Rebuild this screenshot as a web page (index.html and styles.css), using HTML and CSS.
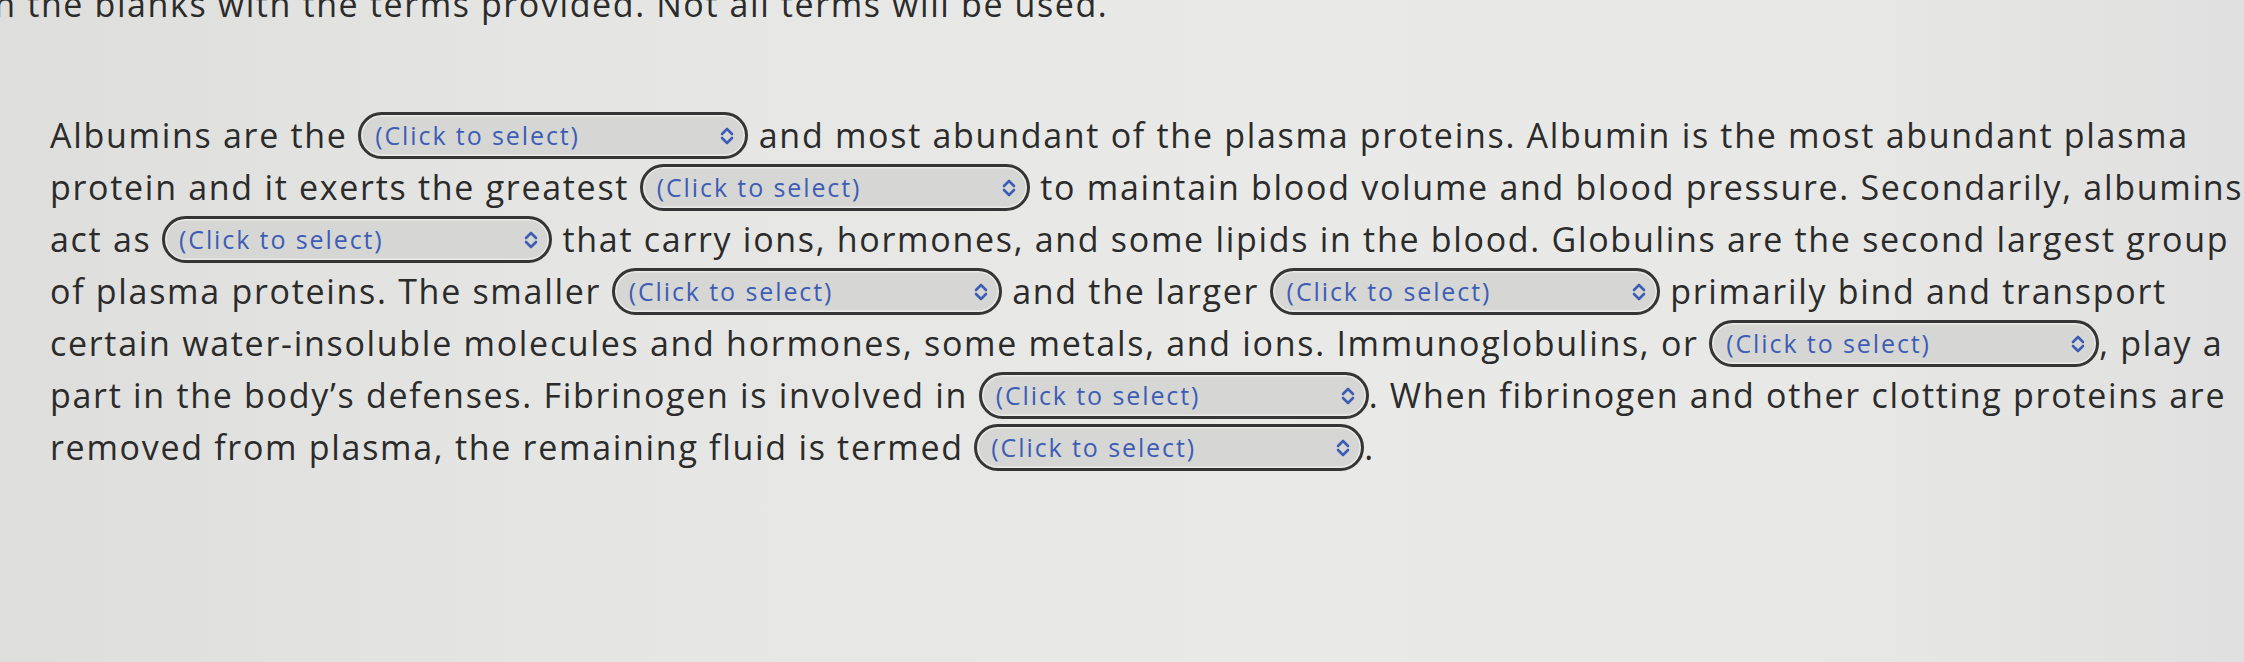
FILE: index.html
```html
<!DOCTYPE html>
<html lang="en">
<head>
<meta charset="utf-8">
<title>Plasma proteins</title>
<link rel="stylesheet" href="styles.css">
</head>
<body>
<div class="page">
  <p class="instructions">Fill in the blanks with the terms provided. Not all terms will be used.</p>
  <div class="passage">
    <div class="line">Albumins are the <span class="pick"><span class="pick-label">(Click to select)</span><svg class="chev" viewBox="0 0 16 22"><path d="M3 9 L8 4 L13 9 M3 13 L8 18 L13 13"/></svg></span> and most abundant of the plasma proteins. Albumin is the most abundant plasma</div>
    <div class="line">protein and it exerts the greatest <span class="pick"><span class="pick-label">(Click to select)</span><svg class="chev" viewBox="0 0 16 22"><path d="M3 9 L8 4 L13 9 M3 13 L8 18 L13 13"/></svg></span> to maintain blood volume and blood pressure. Secondarily, albumins</div>
    <div class="line">act as <span class="pick"><span class="pick-label">(Click to select)</span><svg class="chev" viewBox="0 0 16 22"><path d="M3 9 L8 4 L13 9 M3 13 L8 18 L13 13"/></svg></span> that carry ions, hormones, and some lipids in the blood. Globulins are the second largest group</div>
    <div class="line">of plasma proteins. The smaller <span class="pick"><span class="pick-label">(Click to select)</span><svg class="chev" viewBox="0 0 16 22"><path d="M3 9 L8 4 L13 9 M3 13 L8 18 L13 13"/></svg></span> and the larger <span class="pick"><span class="pick-label">(Click to select)</span><svg class="chev" viewBox="0 0 16 22"><path d="M3 9 L8 4 L13 9 M3 13 L8 18 L13 13"/></svg></span> primarily bind and transport</div>
    <div class="line">certain water-insoluble molecules and hormones, some metals, and ions. Immunoglobulins, or <span class="pick"><span class="pick-label">(Click to select)</span><svg class="chev" viewBox="0 0 16 22"><path d="M3 9 L8 4 L13 9 M3 13 L8 18 L13 13"/></svg></span>, play a</div>
    <div class="line">part in the body’s defenses. Fibrinogen is involved in <span class="pick"><span class="pick-label">(Click to select)</span><svg class="chev" viewBox="0 0 16 22"><path d="M3 9 L8 4 L13 9 M3 13 L8 18 L13 13"/></svg></span>. When fibrinogen and other clotting proteins are</div>
    <div class="line">removed from plasma, the remaining fluid is termed <span class="pick"><span class="pick-label">(Click to select)</span><svg class="chev" viewBox="0 0 16 22"><path d="M3 9 L8 4 L13 9 M3 13 L8 18 L13 13"/></svg></span>.</div>
  </div>
</div>
</body>
</html>
```

FILE: styles.css
```css
html, body {
  margin: 0;
  padding: 0;
}
body {
  width: 2244px;
  height: 662px;
  overflow: hidden;
  background: linear-gradient(90deg, #dededc 0%, #e5e6e3 25%, #e9eae7 55%, #e8e8e6 80%, #e0e0e0 100%);
  font-family: "Open Sans", Lato, sans-serif;
  color: #2b2b2b;
}
.page {
  display: flex;
  flex-direction: column;
}
.instructions {
  margin: -15px 0 0 -76px;
  font-size: 34px;
  letter-spacing: 1.6px;
  line-height: 38px;
  white-space: nowrap;
}
.passage {
  margin-top: 86px;
  padding-left: 50px;
  display: flex;
  flex-direction: column;
}
.line {
  font-size: 34px;
  letter-spacing: 1.7px;
  line-height: 52px;
  height: 52px;
  white-space: nowrap;
}
.pick {
  display: inline-flex;
  align-items: center;
  justify-content: space-between;
  box-sizing: border-box;
  width: 390px;
  height: 47px;
  padding: 0 10px 0 14px;
  border: 3px solid #353535;
  border-radius: 24px;
  background: #d6d7d5;
  box-shadow: inset 0 0 0 1.5px #eaeae8;
  vertical-align: middle;
  margin-top: -6px;
  letter-spacing: 0;
}
.pick-label {
  font-size: 25px;
  letter-spacing: 1.9px;
  color: #3d5db5;
  line-height: 1;
}
.chev {
  width: 16px;
  height: 22px;
  fill: none;
  stroke: #3d5db5;
  stroke-width: 2.6;
  stroke-linecap: round;
  stroke-linejoin: round;
}
```
